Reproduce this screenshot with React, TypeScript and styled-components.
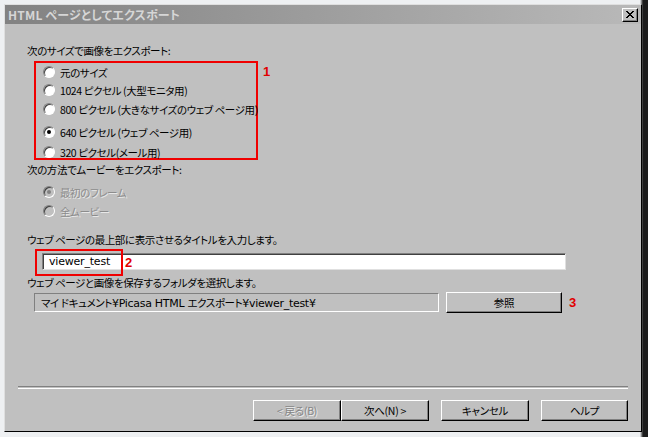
import React from "react";
import styled, { createGlobalStyle } from "styled-components";

const GlobalStyle = createGlobalStyle`
  html, body { margin: 0; padding: 0; }
  body {
    background: #f2f2f2;
    font-family: "Noto Sans CJK JP", "Liberation Sans", sans-serif;
  }
`;

const Screen = styled.div`
  width: 648px;
  height: 437px;
  overflow: hidden;
  background: linear-gradient(to right, #eef0f2 0, #eef0f2 640px, #1c1c1c 643px);
  padding: 4px 0 0 4px;
  box-sizing: border-box;
`;

const Dialog = styled.div`
  width: 638px;
  height: 428px;
  box-sizing: border-box;
  background: #c0c0c0;
  border-top: 1px solid #dfdfdf;
  border-left: 1px solid #dfdfdf;
  border-right: 1px solid #000;
  border-bottom: 1px solid #000;
  display: flex;
  flex-direction: column;
`;

const TitleBar = styled.div`
  height: 19px;
  display: flex;
  align-items: center;
  justify-content: space-between;
  padding: 0 3px 0 3px;
  background: linear-gradient(to right, #828282, #b9b9b9);
`;

const TitleText = styled.span`
  color: #d6d6d6;
  font-size: 12px;
  font-weight: bold;
  letter-spacing: 0.2px;
  font-feature-settings: "palt";
`;

const CloseButton = styled.div`
  width: 16px;
  height: 14px;
  box-sizing: border-box;
  background: #c0c0c0;
  border-top: 1px solid #fff;
  border-left: 1px solid #fff;
  border-right: 1px solid #000;
  border-bottom: 1px solid #000;
  box-shadow: inset -1px -1px #808080;
  display: flex;
  align-items: center;
  justify-content: center;
`;

const Body = styled.div`
  flex: 1;
  display: flex;
  flex-direction: column;
  padding-left: 22px;
  font-size: 10.5px;
  letter-spacing: -0.4px;
  color: #000;
  font-feature-settings: "palt";
`;

const Label = styled.div<{ $mt: number }>`
  height: 14px;
  line-height: 14px;
  margin-top: ${(p) => p.$mt}px;
  white-space: nowrap;
`;

const AnnotatedRow = styled.div<{ $mt: number }>`
  display: flex;
  align-items: flex-start;
  margin-top: ${(p) => p.$mt}px;
`;

const RedBox = styled.div`
  margin-left: 7px;
  width: 224px;
  height: 99px;
  flex-shrink: 0;
  box-sizing: border-box;
  border: 2px solid #f00000;
  padding-left: 7px;
  display: flex;
  flex-direction: column;
`;

const Marker = styled.span<{ $ml: number; $mt: number }>`
  color: #e00000;
  font-family: "Liberation Sans", sans-serif;
  font-weight: bold;
  font-size: 13px;
  letter-spacing: 0;
  line-height: 14px;
  margin-left: ${(p) => p.$ml}px;
  margin-top: ${(p) => p.$mt}px;
`;

const RadioRow = styled.div<{ $mt: number; $disabled?: boolean }>`
  display: flex;
  align-items: center;
  height: 14px;
  margin-top: ${(p) => p.$mt}px;
  gap: 5px;
  white-space: nowrap;
  color: ${(p) => (p.$disabled ? "#8c8c8c" : "#000")};
  text-shadow: ${(p) => (p.$disabled ? "1px 1px 0 #e8e8e8" : "none")};
`;

const IndentedRow = styled(RadioRow)`
  margin-left: 16px;
`;

const RadioCircle = styled.span<{ $checked?: boolean; $disabled?: boolean }>`
  width: 12px;
  height: 12px;
  flex-shrink: 0;
  box-sizing: border-box;
  border-radius: 50%;
  border: 1px solid;
  border-color: #808080 #ffffff #ffffff #808080;
  box-shadow: inset 1px 1px 0 #404040;
  background: ${(p) => (p.$disabled ? "#c0c0c0" : "#fff")};
  display: flex;
  align-items: center;
  justify-content: center;
  &::after {
    content: "";
    width: 4px;
    height: 4px;
    border-radius: 50%;
    background: ${(p) => (p.$disabled ? "#808080" : "#000")};
    display: ${(p) => (p.$checked ? "block" : "none")};
  }
`;

const InputRow = styled.div`
  position: relative;
  margin-top: 2px;
  height: 26px;
  padding-top: 4px;
  box-sizing: border-box;
`;

const TextInput = styled.div`
  margin-left: 15px;
  width: 524px;
  height: 17px;
  box-sizing: border-box;
  background: #fff;
  border-top: 1px solid #808080;
  border-left: 1px solid #808080;
  border-right: 1px solid #e0e0e0;
  border-bottom: 1px solid #e0e0e0;
  box-shadow: inset 1px 1px 0 #404040;
  font-family: "DejaVu Sans", sans-serif;
  font-size: 11px;
  line-height: 15px;
  padding-left: 6px;
  letter-spacing: -0.2px;
`;

const OverlayBox = styled.div`
  position: absolute;
  left: 8px;
  top: 0;
  width: 88px;
  height: 27px;
  box-sizing: border-box;
  border: 2px solid #f00000;
`;

const OverlayMarker = styled.span`
  position: absolute;
  left: 98px;
  top: 7px;
  color: #e00000;
  font-family: "Liberation Sans", sans-serif;
  font-weight: bold;
  font-size: 13px;
  letter-spacing: 0;
  line-height: 14px;
`;

const PathRow = styled.div`
  display: flex;
  align-items: center;
  margin-top: 2px;
  height: 21px;
`;

const PathField = styled.div`
  margin-left: 7px;
  width: 405px;
  height: 19px;
  flex-shrink: 0;
  box-sizing: border-box;
  background: #c0c0c0;
  border-top: 1px solid #808080;
  border-left: 1px solid #808080;
  border-right: 1px solid #fff;
  border-bottom: 1px solid #fff;
  line-height: 17px;
  padding-left: 6px;
  white-space: nowrap;
`;

const PathLatin = styled.span`
  font-family: "DejaVu Sans", sans-serif;
  font-size: 11px;
  letter-spacing: -0.3px;
`;

const WinButton = styled.button<{ $w: number; $ml: number; $disabled?: boolean }>`
  width: ${(p) => p.$w}px;
  height: 21px;
  flex-shrink: 0;
  margin-left: ${(p) => p.$ml}px;
  box-sizing: border-box;
  padding: 0;
  background: #c0c0c0;
  border-top: 1px solid #fff;
  border-left: 1px solid #fff;
  border-right: 1px solid #000;
  border-bottom: 1px solid #000;
  box-shadow: inset -1px -1px 0 #808080;
  font-family: "Noto Sans CJK JP", sans-serif;
  font-size: 10.5px;
  letter-spacing: -0.3px;
  font-feature-settings: "palt";
  color: ${(p) => (p.$disabled ? "#868686" : "#000")};
  text-shadow: ${(p) => (p.$disabled ? "1px 1px 0 #ececec" : "none")};
  cursor: default;
`;

const Separator = styled.div`
  margin: auto 0 0 -9px;
  width: 610px;
  height: 1px;
  border-top: 1px solid #808080;
  border-bottom: 1px solid #fff;
`;

const Footer = styled.div`
  display: flex;
  justify-content: flex-end;
  padding: 11px 13px 10px 0;
  margin-left: -22px;
`;

const sizes = [
  { label: "元のサイズ", mt: 2 },
  { label: "1024 ピクセル (大型モニタ用)", mt: 4 },
  { label: "800 ピクセル (大きなサイズのウェブ ページ用)", mt: 5 },
  { label: "640 ピクセル (ウェブ ページ用)", mt: 9, checked: true },
  { label: "320 ピクセル(メール用)", mt: 6 },
];

export default function App() {
  return (
    <>
      <GlobalStyle />
      <Screen>
        <Dialog>
          <TitleBar>
            <TitleText>HTML ページとしてエクスポート</TitleText>
            <CloseButton>
              <svg width="8" height="7" viewBox="0 0 8 7">
                <path d="M0 0 L7 7 M1 0 L8 7 M7 0 L0 7 M8 0 L1 7" stroke="#000" strokeWidth="1" />
              </svg>
            </CloseButton>
          </TitleBar>
          <Body>
            <Label $mt={20}>次のサイズで画像をエクスポート:</Label>
            <AnnotatedRow $mt={3}>
              <RedBox>
                {sizes.map((s) => (
                  <RadioRow key={s.label} $mt={s.mt}>
                    <RadioCircle $checked={s.checked} />
                    <span>{s.label}</span>
                  </RadioRow>
                ))}
              </RedBox>
              <Marker $ml={5} $mt={4}>1</Marker>
            </AnnotatedRow>
            <Label $mt={3}>次の方法でムービーをエクスポート:</Label>
            <IndentedRow $mt={8} $disabled>
              <RadioCircle $checked $disabled />
              <span>最初のフレーム</span>
            </IndentedRow>
            <IndentedRow $mt={5} $disabled>
              <RadioCircle $disabled />
              <span>全ムービー</span>
            </IndentedRow>
            <Label $mt={15}>ウェブ ページの最上部に表示させるタイトルを入力します。</Label>
            <InputRow>
              <TextInput>viewer_test</TextInput>
              <OverlayBox />
              <OverlayMarker>2</OverlayMarker>
            </InputRow>
            <Label $mt={1}>ウェブ ページと画像を保存するフォルダを選択します。</Label>
            <PathRow>
              <PathField>
                マイ ドキュメント<PathLatin>¥Picasa HTML </PathLatin>エクスポート<PathLatin>¥viewer_test¥</PathLatin>
              </PathField>
              <WinButton $w={116} $ml={7}>参照</WinButton>
              <Marker $ml={7} $mt={0}>3</Marker>
            </PathRow>
            <Separator />
            <Footer>
              <WinButton $w={88} $ml={0} $disabled>&lt; 戻る(B)</WinButton>
              <WinButton $w={88} $ml={0}>次へ(N) &gt;</WinButton>
              <WinButton $w={88} $ml={12}>キャンセル</WinButton>
              <WinButton $w={87} $ml={12}>ヘルプ</WinButton>
            </Footer>
          </Body>
        </Dialog>
      </Screen>
    </>
  );
}
